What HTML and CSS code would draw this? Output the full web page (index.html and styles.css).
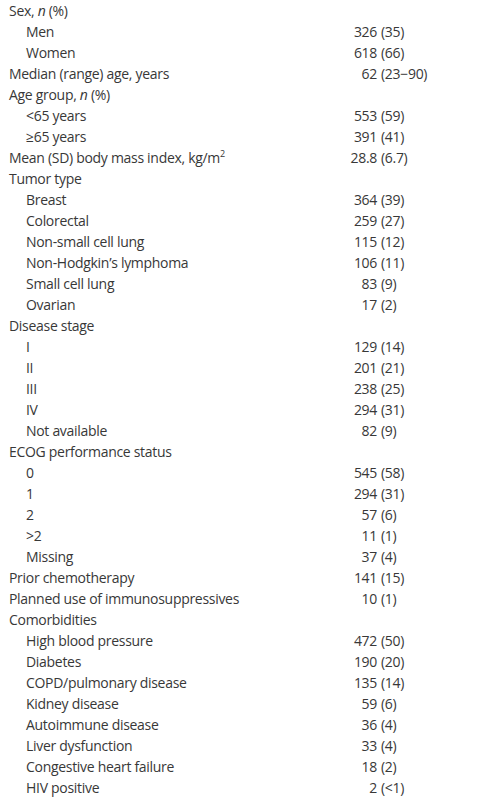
FILE: index.html
```html
<!DOCTYPE html>
<html lang="en">
	<head>
		<meta charset="UTF-8">
		<meta name="viewport" content="width=device-width, initial-scale=1.0">
		<title>Patient characteristics</title>
		<link rel="stylesheet" href="styles.css">
	</head>
	<body>
		<div class="table">
			<div class="row"><div class="label">Sex, <i>n</i> (%)</div></div>
			<div class="row sub"><div class="label">Men</div><div class="num">326</div><div class="pct">(35)</div></div>
			<div class="row sub"><div class="label">Women</div><div class="num">618</div><div class="pct">(66)</div></div>
			<div class="row"><div class="label">Median (range) age, years</div><div class="num">62</div><div class="pct">(23&minus;90)</div></div>
			<div class="row"><div class="label">Age group, <i>n</i> (%)</div></div>
			<div class="row sub"><div class="label">&lt;65 years</div><div class="num">553</div><div class="pct">(59)</div></div>
			<div class="row sub"><div class="label">&ge;65 years</div><div class="num">391</div><div class="pct">(41)</div></div>
			<div class="row"><div class="label">Mean (SD) body mass index, kg/m<sup>2</sup></div><div class="num">28.8</div><div class="pct">(6.7)</div></div>
			<div class="row"><div class="label">Tumor type</div></div>
			<div class="row sub"><div class="label">Breast</div><div class="num">364</div><div class="pct">(39)</div></div>
			<div class="row sub"><div class="label">Colorectal</div><div class="num">259</div><div class="pct">(27)</div></div>
			<div class="row sub"><div class="label">Non-small cell lung</div><div class="num">115</div><div class="pct">(12)</div></div>
			<div class="row sub"><div class="label">Non-Hodgkin&rsquo;s lymphoma</div><div class="num">106</div><div class="pct">(11)</div></div>
			<div class="row sub"><div class="label">Small cell lung</div><div class="num">83</div><div class="pct">(9)</div></div>
			<div class="row sub"><div class="label">Ovarian</div><div class="num">17</div><div class="pct">(2)</div></div>
			<div class="row"><div class="label">Disease stage</div></div>
			<div class="row sub"><div class="label">I</div><div class="num">129</div><div class="pct">(14)</div></div>
			<div class="row sub"><div class="label">II</div><div class="num">201</div><div class="pct">(21)</div></div>
			<div class="row sub"><div class="label">III</div><div class="num">238</div><div class="pct">(25)</div></div>
			<div class="row sub"><div class="label">IV</div><div class="num">294</div><div class="pct">(31)</div></div>
			<div class="row sub"><div class="label">Not available</div><div class="num">82</div><div class="pct">(9)</div></div>
			<div class="row"><div class="label">ECOG performance status</div></div>
			<div class="row sub"><div class="label">0</div><div class="num">545</div><div class="pct">(58)</div></div>
			<div class="row sub"><div class="label">1</div><div class="num">294</div><div class="pct">(31)</div></div>
			<div class="row sub"><div class="label">2</div><div class="num">57</div><div class="pct">(6)</div></div>
			<div class="row sub"><div class="label">&gt;2</div><div class="num">11</div><div class="pct">(1)</div></div>
			<div class="row sub"><div class="label">Missing</div><div class="num">37</div><div class="pct">(4)</div></div>
			<div class="row"><div class="label">Prior chemotherapy</div><div class="num">141</div><div class="pct">(15)</div></div>
			<div class="row"><div class="label">Planned use of immunosuppressives</div><div class="num">10</div><div class="pct">(1)</div></div>
			<div class="row"><div class="label">Comorbidities</div></div>
			<div class="row sub"><div class="label">High blood pressure</div><div class="num">472</div><div class="pct">(50)</div></div>
			<div class="row sub"><div class="label">Diabetes</div><div class="num">190</div><div class="pct">(20)</div></div>
			<div class="row sub"><div class="label">COPD/pulmonary disease</div><div class="num">135</div><div class="pct">(14)</div></div>
			<div class="row sub"><div class="label">Kidney disease</div><div class="num">59</div><div class="pct">(6)</div></div>
			<div class="row sub"><div class="label">Autoimmune disease</div><div class="num">36</div><div class="pct">(4)</div></div>
			<div class="row sub"><div class="label">Liver dysfunction</div><div class="num">33</div><div class="pct">(4)</div></div>
			<div class="row sub"><div class="label">Congestive heart failure</div><div class="num">18</div><div class="pct">(2)</div></div>
			<div class="row sub"><div class="label">HIV positive</div><div class="num">2</div><div class="pct">(&lt;1)</div></div>
		</div>
	</body>
</html>
```

FILE: styles.css
```css
* {
    margin: 0;
    padding: 0;
    box-sizing: border-box;
}

body {
    font-family: 'Open Sans', 'Noto Sans', sans-serif;
    font-size: 14px;
    letter-spacing: -0.3px;
    color: #383838;
    background: #ffffff;
    width: 482px;
}

.table {
    display: flex;
    flex-direction: column;
    padding: 0 0 0 9px;
}

.row {
    display: grid;
    grid-template-columns: 324px 40px 1fr;
    column-gap: 4px;
    height: 21px;
    line-height: 21px;
    white-space: nowrap;
}

.row.sub .label {
    padding-left: 17px;
}

.num {
    text-align: right;
}

.pct {
    text-align: left;
}

sup {
    font-size: 9px;
    line-height: 0;
    vertical-align: 6px;
}
```
